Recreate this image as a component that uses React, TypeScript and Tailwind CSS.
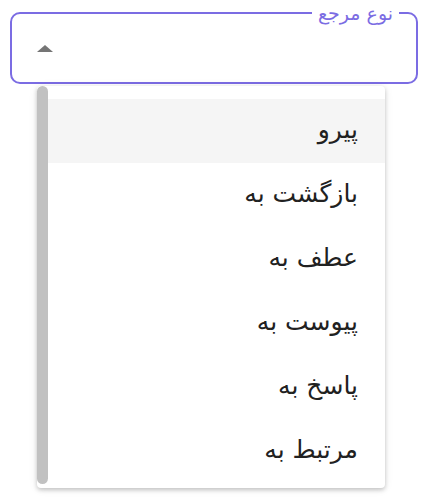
const options = ['پیرو', 'بازگشت به', 'عطف به', 'پیوست به', 'پاسخ به', 'مرتبط به']

export default function App() {
  return (
    <div dir="rtl" className="h-[504px] w-[428px] bg-white font-['DejaVu_Sans',sans-serif]">
      <div className="px-[10px] pt-[4px]">
        <fieldset className="h-[80px] rounded-[10px] border-2 border-[#7b6ce3] px-[17px]">
          <legend className="px-[6px] text-[19px] leading-[18px] text-[#7b6ce3]">نوع مرجع</legend>
          <div className="flex h-[52px] items-center justify-end pl-[8px]">
            <span className="h-0 w-0 border-x-[8px] border-b-[7px] border-x-transparent border-b-[#757575]" />
          </div>
        </fieldset>
      </div>

      <div className="mr-[43px] mt-[2px] flex h-[402px] w-[348px] rounded-[4px] bg-white shadow-[0_2px_4px_rgba(0,0,0,0.2),0_1px_10px_rgba(0,0,0,0.08)]">
        <ul className="flex-1 pt-[13px]">
          {options.map((opt, i) => (
            <li
              key={opt}
              className={
                'flex h-[64px] items-center pb-[3px] pr-[27px] text-[25px] text-[#212121] ' +
                (i === 0 ? 'bg-[#f5f5f5]' : '')
              }
            >
              {opt}
            </li>
          ))}
        </ul>
        <div className="mb-[4px] w-[11px] rounded-full bg-[#c1c1c1]" />
      </div>
    </div>
  )
}
